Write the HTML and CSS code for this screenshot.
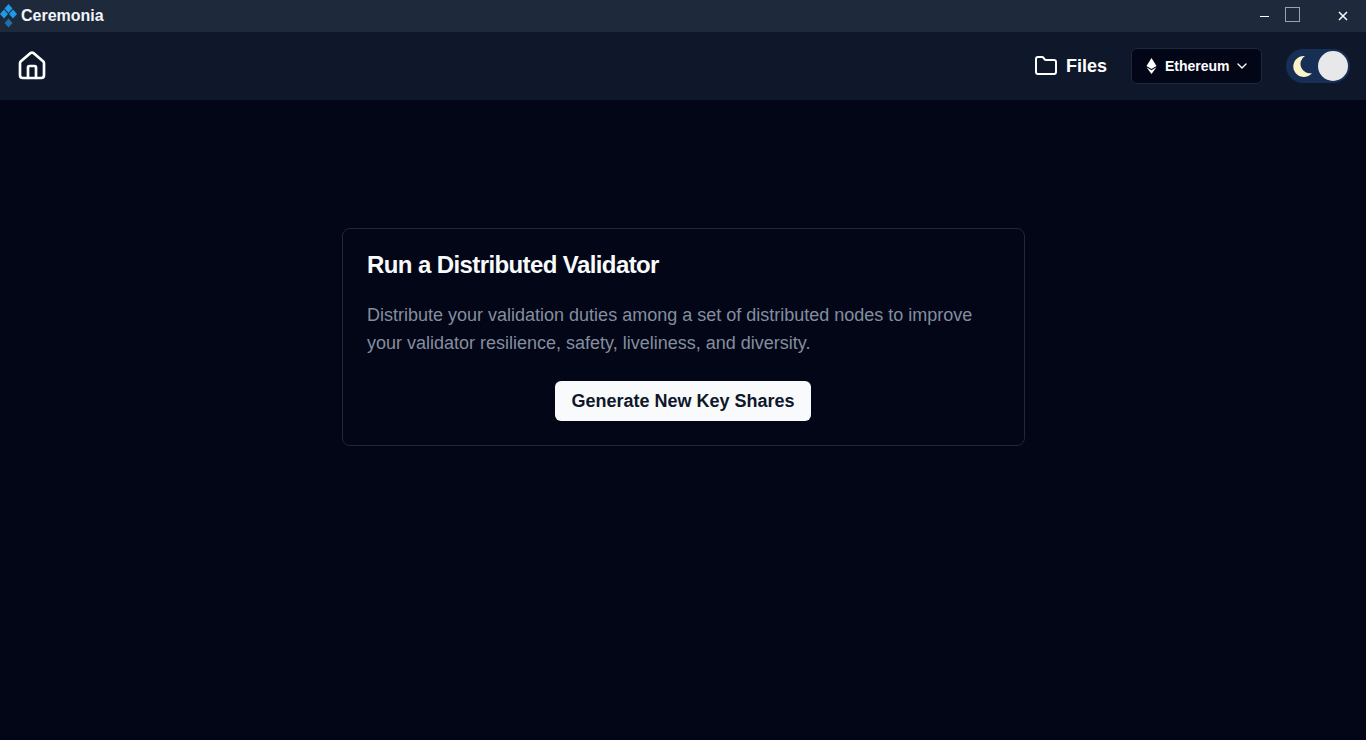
FILE: index.html
```html
<!DOCTYPE html>
<html>
<head>
    <title>Ceremonia</title>
    <link rel="stylesheet" href="styles.css">
</head>
<body>
    <div class="titlebar">
        <div class="app-name">
            <svg class="logo" width="18" height="26" viewBox="0 0 18 26">
                <path d="M8.500 1l4 4.500-4 4.500-4-4.500z" fill="#1d9be6"/>
                <path d="M4 6.500l4 4.500-4 4.500-4-4.500z" fill="#1d9be6"/>
                <path d="M13 6.500l4 4.500-4 4.500-4-4.500z" fill="#1d9be6"/>
                <path d="M8.500 15.500l4 4.500-4 4.500-4-4.500z" fill="#1f6fa8"/>
            </svg>
            <span>Ceremonia</span>
        </div>
        <div class="window-controls">
            <span class="win-min"></span>
            <span class="win-max"></span>
            <svg class="win-close" width="10" height="10" viewBox="0 0 10 10">
                <path d="M1 1l8 8M9 1l-8 8" stroke="#fff" stroke-width="1.500"/>
            </svg>
        </div>
    </div>

    <nav class="navbar">
        <svg class="home-icon" width="32" height="32" viewBox="0 0 24 24" fill="none" stroke="#fff" stroke-width="2" stroke-linecap="round" stroke-linejoin="round">
            <path d="M3 10a2 2 0 0 1 .7-1.500l7-6a2 2 0 0 1 2.600 0l7 6a2 2 0 0 1 .7 1.500v9a2 2 0 0 1-2 2H5a2 2 0 0 1-2-2z"/>
            <path d="M15 21v-8a1 1 0 0 0-1-1h-4a1 1 0 0 0-1 1v8"/>
        </svg>
        <div class="nav-right">
            <a class="files-link">
                <svg width="24" height="24" viewBox="0 0 24 24" fill="none" stroke="#fff" stroke-width="2" stroke-linecap="round" stroke-linejoin="round">
                    <path d="M20 20a2 2 0 0 0 2-2V8a2 2 0 0 0-2-2h-7.900a2 2 0 0 1-1.690-.9L9.600 3.900A2 2 0 0 0 7.930 3H4a2 2 0 0 0-2 2v13a2 2 0 0 0 2 2z"/>
                </svg>
                <span>Files</span>
            </a>
            <button class="network-select">
                <svg width="11" height="16" viewBox="0 0 11 16">
                    <path d="M5.500 0L0.500 8.100l5 3 5-3z" fill="#fff"/>
                    <path d="M5.500 12.200L0.500 9.200l5 6.800 5-6.800z" fill="#fff"/>
                </svg>
                <span class="network-name">Ethereum</span>
                <svg width="16" height="16" viewBox="0 0 24 24" fill="none" stroke="#fff" stroke-width="2" stroke-linecap="round" stroke-linejoin="round">
                    <path d="M6 9l6 6 6-6"/>
                </svg>
            </button>
            <div class="theme-toggle">
                <svg width="22" height="22" viewBox="0 0 22 22">
                    <path d="M12 1A10.500 10.500 0 1 0 19 18A9.300 9.300 0 0 1 12 1z" fill="#fdf3c8"/>
                </svg>
                <span class="toggle-knob"></span>
            </div>
        </div>
    </nav>

    <main class="content">
        <div class="card">
            <h3>Run a Distributed Validator</h3>
            <p>Distribute your validation duties among a set of distributed nodes to improve your validator resilience, safety, liveliness, and diversity.</p>
            <div class="card-actions">
                <button class="primary-btn">Generate New Key Shares</button>
            </div>
        </div>
    </main>
</body>
</html>
```

FILE: styles.css
```css
* {
    box-sizing: border-box;
}
body {
    margin: 0;
    height: 740px;
    overflow: hidden;
    background: #020617;
    color: #fff;
    font-family: "Liberation Sans", Arial, sans-serif;
}
button {
    font-family: inherit;
}

.titlebar {
    height: 32px;
    background: #1e293b;
    display: flex;
    align-items: center;
    justify-content: space-between;
}
.app-name {
    display: flex;
    align-items: center;
    gap: 3px;
    font-size: 16px;
    font-weight: 700;
    color: #f1f5f9;
}
.window-controls {
    display: flex;
    align-items: center;
    padding-right: 18px;
}
.win-min {
    width: 9px;
    height: 1px;
    background: #fff;
    margin-right: 16px;
    margin-top: 1px;
}
.win-max {
    width: 15px;
    height: 15px;
    border: 1px solid #94a3b8;
    margin-right: 38px;
    margin-top: -3px;
}
.win-close {
    display: block;
}

.navbar {
    height: 68px;
    background: #0f172a;
    display: flex;
    align-items: center;
    justify-content: space-between;
    padding: 0 16px;
}
.nav-right {
    display: flex;
    align-items: center;
}
.files-link {
    display: flex;
    align-items: center;
    gap: 8px;
    font-size: 18px;
    font-weight: 700;
    margin-right: 24px;
}
.network-select {
    width: 131px;
    height: 36px;
    display: flex;
    align-items: center;
    gap: 0;
    padding: 0 0 0 14px;
    background: #020617;
    border: 1px solid #1e293b;
    border-radius: 6px;
    color: #fff;
    font-size: 14px;
    font-weight: 700;
    margin-right: 24px;
}
.network-name {
    margin: 0 4px 0 8px;
}
.theme-toggle {
    width: 64px;
    height: 34px;
    border-radius: 17px;
    background: #172f55;
    display: flex;
    align-items: center;
    justify-content: space-between;
    padding: 0 2px 0 7px;
}
.toggle-knob {
    width: 30px;
    height: 30px;
    border-radius: 50%;
    background: #e8e8ea;
}

.content {
    display: flex;
    justify-content: center;
    padding-top: 128px;
    padding-left: 1px;
}
.card {
    width: 683px;
    height: 218px;
    padding: 24px;
    background: #020617;
    border: 1px solid #1e293b;
    border-radius: 8px;
}
.card h3 {
    margin: 0;
    font-size: 24px;
    line-height: 24px;
    font-weight: 700;
    letter-spacing: -0.6px;
    color: #f8fafc;
}
.card p {
    margin: 24px 0 0;
    font-size: 18px;
    line-height: 28px;
    color: #848e9f;
}
.card-actions {
    display: flex;
    justify-content: center;
    margin-top: 24px;
    padding-right: 2px;
}
.primary-btn {
    width: 256px;
    height: 40px;
    padding: 0 0 0 1px;
    background: #f8fafc;
    color: #0f172a;
    border: none;
    border-radius: 6px;
    font-size: 18px;
    font-weight: 700;
}
```
